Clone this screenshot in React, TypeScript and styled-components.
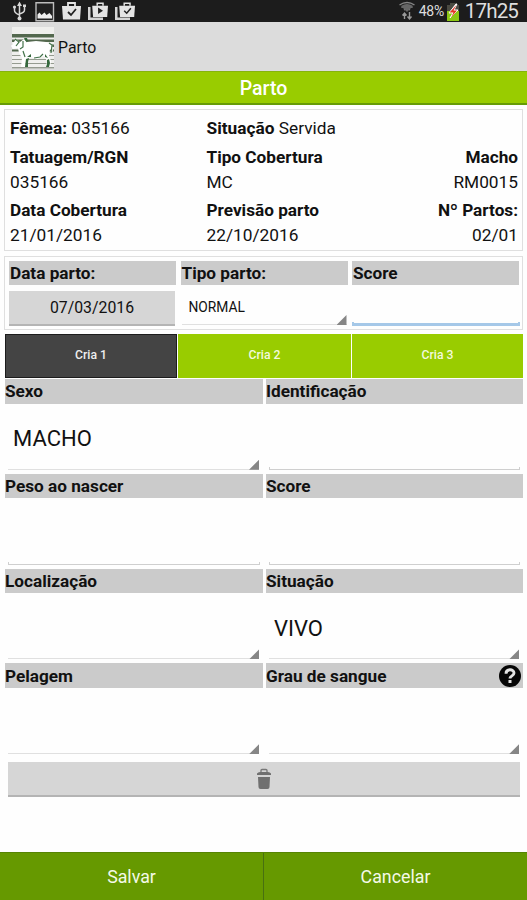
import React from 'react';
import styled, { createGlobalStyle } from 'styled-components';

const GlobalStyle = createGlobalStyle`
  * { box-sizing: border-box; }
  body { margin: 0; background: #fefefe; }
  button { border: 0; padding: 0; margin: 0; font: inherit; color: inherit; }
`;

const Screen = styled.div`
  width: 527px;
  height: 900px;
  display: flex;
  flex-direction: column;
  overflow: hidden;
  background: #fefefe;
  color: #111;
  font-family: Roboto, 'Liberation Sans', sans-serif;
  font-size: 17.2px;
`;

const StatusBar = styled.header`
  height: 22px;
  flex: none;
  display: flex;
  justify-content: space-between;
  background: #1c1c1c;
  color: #dedede;
  padding: 0 9px 0 11px;
`;

const StatusIcons = styled.div`
  display: flex;
  align-items: flex-start;
  gap: 6px;
  svg { display: block; }
`;

const StatusInfo = styled.div`
  display: flex;
  align-items: center;
  svg { display: block; }
`;

const Battery = styled.span`
  font-size: 14px;
  letter-spacing: -0.3px;
  margin: 0 2px 0 3px;
  line-height: 22px;
`;

const Clock = styled.span`
  font-size: 20.6px;
  letter-spacing: -0.9px;
  line-height: 22px;
  margin-left: 5px;
`;

const ActionBar = styled.div`
  height: 49px;
  flex: none;
  display: flex;
  align-items: center;
  gap: 4px;
  padding: 2px 0 0 11px;
  background: #dcdcdc;
  font-size: 15.8px;
`;

const TitleBar = styled.h1`
  height: 34px;
  flex: none;
  margin: 0;
  border-top: 1px solid #86b40c;
  border-bottom: 2px solid #669b06;
  background: #99cc00;
  color: #fff;
  font-size: 19.5px;
  font-weight: 500;
  line-height: 33px;
  text-align: center;
`;

const Content = styled.main`
  flex: 1;
  padding: 4px 4px 0 5px;
`;

const InfoPanel = styled.section`
  height: 142px;
  margin-left: -1px;
  padding: 7px 4px 0 5px;
  border: 1px solid #dfdfdf;
  display: grid;
  grid-template-columns: 196.5px 170px 1fr;
  grid-template-rows: 23px 29px 24.500px 28.500px 25px;
  align-items: end;
`;

const InfoText = styled.span<{ $bold?: boolean; $end?: boolean; $span?: number }>`
  font-weight: ${p => (p.$bold ? 700 : 400)};
  font-size: ${p => (p.$bold ? 17.2 : 17.3)}px;
  line-height: 24px;
  white-space: nowrap;
  text-align: ${p => (p.$end ? 'right' : 'left')};
  grid-column: ${p => (p.$span ? `span ${p.$span}` : 'auto')};
`;

const BirthPanel = styled.section`
  height: 74px;
  margin: 5px 0 0 -1px;
  padding: 4px 4px 0 4px;
  border: 1px solid #dfdfdf;
  display: grid;
  grid-template-columns: 167px 167px 167px;
  column-gap: 4.5px;
`;

const Field = styled.div`
  display: flex;
  flex-direction: column;
  min-width: 0;
`;

const Label = styled.div<{ $height: number }>`
  height: ${p => p.$height}px;
  flex: none;
  display: flex;
  align-items: center;
  justify-content: space-between;
  padding-right: 1px;
  background: #cbcbcb;
  font-size: 17.2px;
  font-weight: 700;
  white-space: nowrap;
`;

const BirthLabel = styled(Label)`
  padding-left: 1px;
`;

const DateButton = styled.button`
  height: 35px;
  margin: 6px 1px 0 0;
  background: #d6d6d6;
  border-bottom: 2px solid #b4b4b4;
  font-size: 15.8px;
`;

const Spinner = styled.div<{ $small?: boolean }>`
  flex: 1;
  display: flex;
  align-items: ${p => (p.$small ? 'flex-start' : 'center')};
  justify-content: space-between;
  margin: ${p => (p.$small ? '5px 1px 4px 1px' : '0 4px 4px 3px')};
  padding: ${p => (p.$small ? '9px 0 0 7px' : '7px 0 0 5px')};
  border-bottom: 1px solid #e0e0e0;
  font-size: ${p => (p.$small ? 13.8 : 22)}px;
  line-height: 1.2;
`;

const Corner = styled.span`
  width: 10px;
  height: 10px;
  align-self: flex-end;
  margin-bottom: -1px;
  background: #868686;
  clip-path: polygon(100% 0, 100% 100%, 0 100%);
`;

const Input = styled.div<{ $focused?: boolean }>`
  height: ${p => (p.$focused ? 4 : 3)}px;
  margin: ${p => (p.$focused ? 'auto -1px 3px 0' : 'auto 3px 4px 3px')};
  border: solid ${p => (p.$focused ? '#a5c8e8' : '#cfcfcf')};
  border-width: ${p => (p.$focused ? '0 2px 3px' : '0 1px 1px')};
`;

const Tabs = styled.nav`
  height: 44px;
  margin-top: 4px;
  display: grid;
  grid-template-columns: 172px 173px 171px;
  column-gap: 1px;
`;

const Tab = styled.button<{ $active?: boolean }>`
  background: ${p => (p.$active ? '#444' : '#99cc00')};
  border: ${p => (p.$active ? '1px solid #1c1c1c' : '0')};
  color: ${p => (p.$active ? '#eee' : '#f3fadc')};
  font-size: 12.2px;
  font-weight: 500;
  padding-bottom: 3px;
`;

const Form = styled.section`
  margin-top: 1px;
  display: grid;
  grid-template-columns: 258px 257px;
  grid-auto-rows: 94.8px;
  column-gap: 3px;
`;

const DeleteButton = styled.button`
  display: flex;
  align-items: center;
  justify-content: center;
  width: 512px;
  height: 35px;
  margin: 4px 0 0 3px;
  background: #d6d6d6;
  border-bottom: 2px solid #b4b4b4;
`;

const Footer = styled.footer`
  height: 48px;
  flex: none;
  display: grid;
  grid-template-columns: 264px 1fr;
  border-top: 1px solid #568404;
`;

const FooterButton = styled.button<{ $divided?: boolean }>`
  background: #669900;
  border-right: ${p => (p.$divided ? '1px solid #487010' : '0')};
  color: #f4f9e8;
  font-size: 17.8px;
`;

const UsbIcon = () => (
  <svg width="18" height="22" viewBox="0 0 18 22" fill="none" stroke="#d8d8d8" strokeWidth="1.5">
    <path d="M8.500 5v13M3.500 8v2.500q0 2.500 5 4.500M13.500 7v3q0 2.500-5 4" />
    <path d="M8.500 1.500 11 6H6z M12 4.500h3V7h-3z" fill="#d8d8d8" stroke="none" />
    <circle cx="3.500" cy="7" r="1.600" fill="#d8d8d8" stroke="none" />
    <circle cx="8.500" cy="18.500" r="2" fill="#d8d8d8" stroke="none" />
  </svg>
);

const PhotoIcon = () => (
  <svg width="20" height="22" viewBox="0 0 20 22">
    <path d="M1 2.700h17.500v18H1z" fill="#202020" stroke="#bcbcbc" strokeWidth="1.400" />
    <path d="M2.500 18.500v-4l2-2 2 2.500 3-2.500 2 2.500 3-2 2.500 3v2.500z" fill="#eee" />
  </svg>
);

const BagIcon = ({ play, stacked }: { play?: boolean; stacked?: boolean }) => (
  <svg width="21" height="22" viewBox="0 0 21 22">
    {stacked && <path d="M0 7v13h15v-2.500H2.500V7z" fill="#d4d4d4" />}
    <g transform={stacked ? 'translate(3.4 .8) scale(.83)' : undefined}>
      <path d="M7 6V3h7v3" fill="none" stroke="#e4e4e4" strokeWidth="1.800" />
      <path d="M1 6h19l-1 13.500H2z" fill="#e4e4e4" />
      {play ? <path d="m8 8 6 4-6 4z" fill="#222" /> : <path d="m7 12 3 3 5-6" fill="none" stroke="#222" strokeWidth="1.800" />}
    </g>
  </svg>
);

const WifiIcon = () => (
  <svg width="18" height="22" viewBox="0 0 18 22" fill="none" stroke="#858585" strokeWidth="1.400">
    <path d="M1.500 5q7.500-5 15 0M3.500 7.500q5.500-4 11 0M6 10q3-2 6 0" />
    <path d="M3 6q6-4 12 0l-6 6z" fill="#666" stroke="none" />
    <path d="M6.500 19v-6m-2 2.500 2-2.500 2 2.500M11.500 12v7m-2-2.500 2 2.500 2-2.500" stroke="#999" />
  </svg>
);

const BatteryIcon = () => (
  <svg width="14" height="22" viewBox="0 0 14 22">
    <path d="M4 3h6v2h3v6H1V5h3z" fill="#4a4a42" />
    <path d="M1 11h12v10H1z" fill="#8bc714" />
    <path d="m10 4-7 9h4l-3 5 8-8H8l3-6z" fill="#fff" stroke="#fff" />
    <path d="m10.500 5-7 7.500h4l-2.500 5 6-7H7.500z" fill="#e33423" />
  </svg>
);

const CowLogo = () => (
  <svg width="43" height="42" viewBox="0 0 43 42">
    <path d="M1 0h42v42H1z" fill="#efefed" />
    <path d="M1 7h42v3.500H1zm0 5.500h42v2.500H1zm0 5h42v2.500H1zm0 5h42v2H1z" fill="#53684e" />
    <path d="M1 28h42v1H1zm0 4h42v1H1zm0 4h42v1H1zm0 4h42v1.500H1z" fill="#959b90" />
    <path d="m5 12 4 3 4-3 3 3 9-1 10 1 6 2 1 8-3-3-1 7 2 5-1 6h-4l1-6-3-5-7 3-7-2-4 3-1 7h-4l1-9-3-5-1-5-5 1-2-3 3-4z" fill="#fff" />
    <path d="m4 12 4 3-3 4m4 3 3-2 0-6m2-2 2 3M12 24l2 6m9 1 6-1 3-3m6-11 3 2-1 8" fill="none" stroke="#427249" strokeWidth="1.200" />
    <path d="m15 32 3-1-1 4v5h-3zm21 1 2-1 1 4-1 4h-3l1-3zM13 11h3l1 3-3-1zM16 30l4-3v3zM34 27l3 4-3-1z" fill="#35683d" />
  </svg>
);

const HelpIcon = () => (
  <svg width="24" height="24" viewBox="0 0 24 24">
    <circle cx="12" cy="12" r="11" fill="#070707" />
    <path d="M8 9.700C8 4.500 16 4.700 16 9c0 3-4 2.700-4 5.500" fill="none" stroke="#e4e4e4" strokeWidth="2.900" />
    <path d="M10.500 16h3v3h-3z" fill="#e4e4e4" />
  </svg>
);

const TrashIcon = () => (
  <svg width="16" height="22" viewBox="0 0 16 22">
    <path d="M5 4V2.500Q5 1.500 6 1.500h4q1 0 1 1V4" fill="none" stroke="#777" strokeWidth="1.300" />
    <path d="M1 7V5.500Q2 4 4 4h8q2 0 3 1.500V7zM2 9h12l-.5 10q0 2-2 2h-7q-2 0-2-2z" fill="#707070" />
  </svg>
);

type FormField = { label: string; kind: 'spinner' | 'input'; value?: string; help?: boolean };

const fields: FormField[] = [
  { label: 'Sexo', kind: 'spinner', value: 'MACHO' },
  { label: 'Identificação', kind: 'input' },
  { label: 'Peso ao nascer', kind: 'input' },
  { label: 'Score', kind: 'input' },
  { label: 'Localização', kind: 'spinner' },
  { label: 'Situação', kind: 'spinner', value: 'VIVO' },
  { label: 'Pelagem', kind: 'spinner' },
  { label: 'Grau de sangue', kind: 'spinner', help: true },
];

export default function App() {
  return (
    <>
      <GlobalStyle />
      <Screen>
        <StatusBar>
          <StatusIcons>
            <UsbIcon />
            <PhotoIcon />
            <BagIcon />
            <BagIcon play stacked />
            <BagIcon stacked />
          </StatusIcons>
          <StatusInfo>
            <WifiIcon />
            <Battery>48%</Battery>
            <BatteryIcon />
            <Clock>17h25</Clock>
          </StatusInfo>
        </StatusBar>
        <ActionBar>
          <CowLogo />
          <span>Parto</span>
        </ActionBar>
        <TitleBar>Parto</TitleBar>
        <Content>
          <InfoPanel>
            <InfoText><b>Fêmea:</b> 035166</InfoText>
            <InfoText $span={2}><b>Situação</b> Servida</InfoText>
            <InfoText $bold>Tatuagem/RGN</InfoText>
            <InfoText $bold>Tipo Cobertura</InfoText>
            <InfoText $bold $end>Macho</InfoText>
            <InfoText>035166</InfoText>
            <InfoText>MC</InfoText>
            <InfoText $end>RM0015</InfoText>
            <InfoText $bold>Data Cobertura</InfoText>
            <InfoText $bold>Previsão parto</InfoText>
            <InfoText $bold $end>Nº Partos:</InfoText>
            <InfoText>21/01/2016</InfoText>
            <InfoText>22/10/2016</InfoText>
            <InfoText $end>02/01</InfoText>
          </InfoPanel>
          <BirthPanel>
            <Field>
              <BirthLabel $height={24}>Data parto:</BirthLabel>
              <DateButton>07/03/2016</DateButton>
            </Field>
            <Field>
              <BirthLabel $height={24}>Tipo parto:</BirthLabel>
              <Spinner $small>NORMAL<Corner /></Spinner>
            </Field>
            <Field>
              <BirthLabel $height={24}>Score</BirthLabel>
              <Input $focused />
            </Field>
          </BirthPanel>
          <Tabs>
            <Tab $active>Cria 1</Tab>
            <Tab>Cria 2</Tab>
            <Tab>Cria 3</Tab>
          </Tabs>
          <Form>
            {fields.map((f, i) => (
              <Field key={i}>
                <Label $height={24.5}>
                  {f.label}
                  {f.help && <HelpIcon />}
                </Label>
                {f.kind === 'spinner' ? (
                  <Spinner><span>{f.value}</span><Corner /></Spinner>
                ) : (
                  <Input />
                )}
              </Field>
            ))}
          </Form>
          <DeleteButton aria-label="Excluir"><TrashIcon /></DeleteButton>
        </Content>
        <Footer>
          <FooterButton $divided>Salvar</FooterButton>
          <FooterButton>Cancelar</FooterButton>
        </Footer>
      </Screen>
    </>
  );
}
